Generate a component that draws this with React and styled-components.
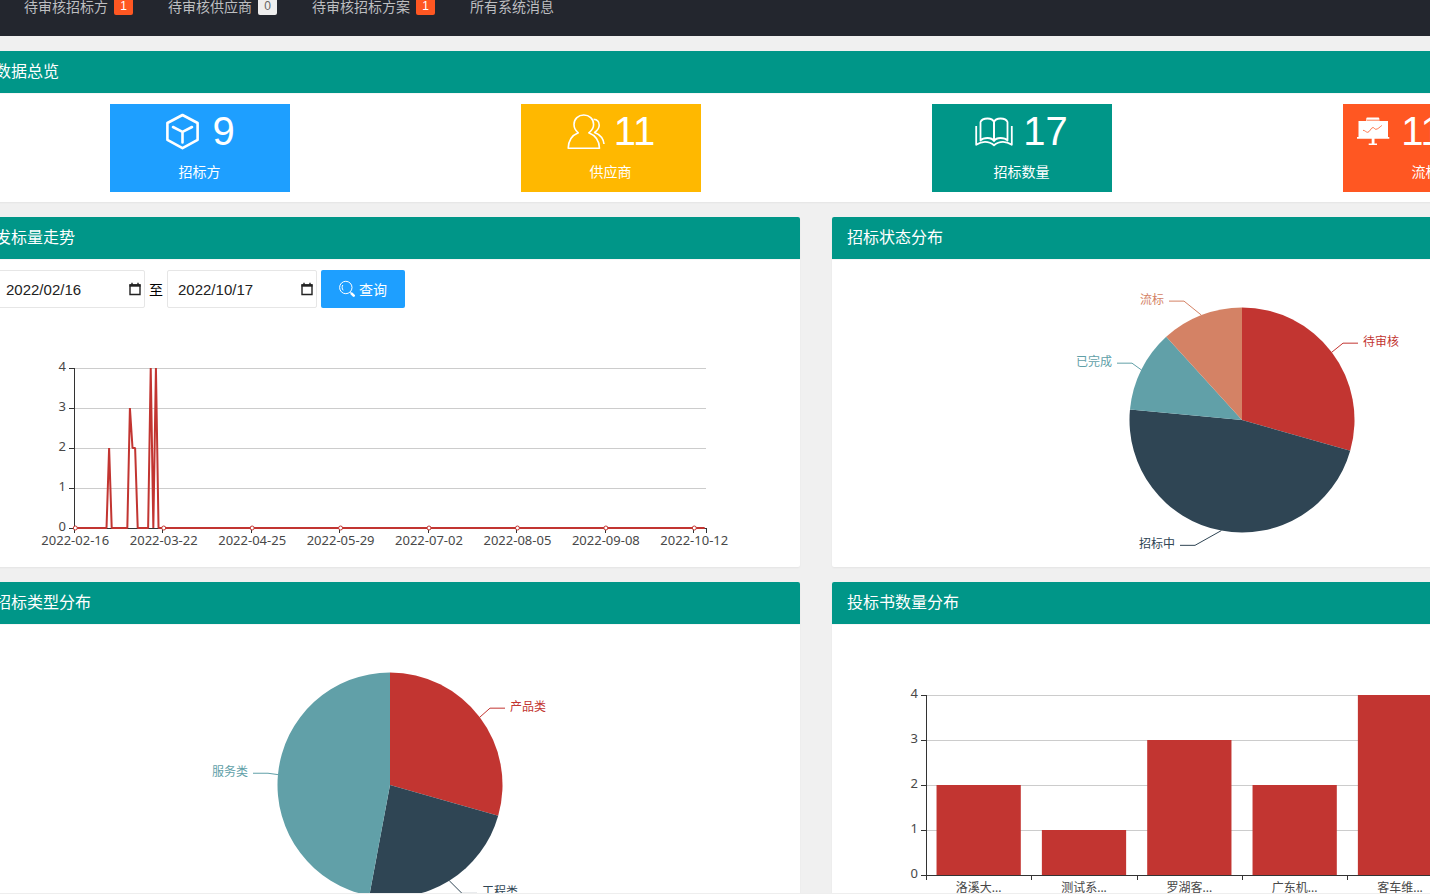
import React, { useState } from 'react';
import styled, { createGlobalStyle } from 'styled-components';

const GlobalStyle = createGlobalStyle`
  * {
    box-sizing: border-box;
  }
  body {
    margin: 0;
    background: #f0f0f0;
    color: #000;
    font-family: "Liberation Sans", "Noto Sans CJK SC", sans-serif;
    font-size: 14px;
  }
`;

// 页面外框
const Shell = styled.div`
  height: 100vh;
  overflow: hidden;
  border-bottom: 1px solid #eee;
`;

const Nav = styled.nav`
  display: flex;
  gap: 35px;
  height: 60px;
  margin-top: -24px;
  padding-left: 24px;
  background: #23262e;
`;

const NavLink = styled.a`
  display: flex;
  align-items: center;
  color: #bdbec0;
  text-decoration: none;
  white-space: nowrap;
`;

const Badge = styled.span`
  width: 19px;
  height: 18px;
  margin-left: 6px;
  border-radius: 2px;
  background: ${(props) => (props.$gray ? '#eee' : '#ff5722')};
  color: ${(props) => (props.$gray ? '#666' : '#fff')};
  font-size: 12px;
  line-height: 18px;
  text-align: center;
`;

const Main = styled.main`
  display: grid;
  grid-template-columns: 1fr 1fr;
  gap: 15px 32px;
  margin: 15px -222px 0 -20px;
`;

// 卡片
const Panel = styled.section`
  grid-column: ${(props) => (props.$wide ? '1 / -1' : 'auto')};
  border-radius: 2px;
  background: #fff;
  box-shadow: 0 1px 2px rgba(0, 0, 0, 0.05);
`;

const PanelTitle = styled.h2`
  margin: 0;
  padding: 0 15px;
  border-bottom: 1px solid #f6f6f6;
  border-radius: 2px 2px 0 0;
  background: #009688;
  background-clip: padding-box;
  color: #fff;
  font-size: 16px;
  font-weight: 400;
  line-height: 42px;
`;

const PanelBody = styled.div`
  padding: 10px 15px;
`;

const StatRow = styled.div`
  display: grid;
  grid-template-columns: repeat(4, 1fr);
  justify-items: center;
  padding: 10px 14px;
`;

const StatCard = styled.div`
  width: 180px;
  height: 88px;
  background: ${(props) => props.$color};
  color: #fff;
  text-align: center;
`;

const StatValue = styled.div`
  display: flex;
  align-items: center;
  justify-content: center;
  gap: 8px;
  height: 54px;
  font-size: 40px;
`;

const StatLabel = styled.div`
  line-height: 28px;
`;

const Filter = styled.form`
  display: flex;
  align-items: center;
  gap: 4px;
`;

const DateBox = styled.label`
  display: flex;
  align-items: center;
  width: 150px;
  height: 38px;
  padding: 0 2px 0 10px;
  border: 1px solid #e6e6e6;
  border-radius: 2px;
  background: #fff;
`;

const DateInput = styled.input`
  flex: 1;
  min-width: 0;
  padding: 0;
  border: 0;
  outline: 0;
  background: none;
  color: #222;
  font-family: inherit;
  font-size: 15px;
`;

const SearchButton = styled.button`
  display: flex;
  align-items: center;
  gap: 4px;
  height: 38px;
  padding: 0 18px;
  border: 0;
  border-radius: 2px;
  background: #1e9fff;
  color: #fff;
  font-family: inherit;
  font-size: 14px;
  cursor: pointer;
`;

const Chart = styled.svg`
  display: block;
  width: 100%;
  height: auto;
  overflow: visible;
  font-family: "Noto Sans", "Noto Sans CJK SC", sans-serif;
  font-size: 12px;
`;

const AxisText = styled.text`
  fill: #484848;
  font-size: ${(props) => (props.$cjk ? '12px' : '13px')};
  text-anchor: ${(props) => props.$anchor || 'middle'};
`;

// 图标
const CubeIcon = () => (
  <svg width="40" height="40" viewBox="0 0 40 40" fill="none" stroke="#fff" strokeWidth="2.6" strokeLinejoin="round" strokeLinecap="round">
    <path d="M18.5 4 33.6 12v16.8L18.5 37.2 3.4 28.8V12z" />
    <path d="M9 16l9.5 4.8L28 16M18.5 20.8v10.6" />
  </svg>
);

const UserIcon = () => (
  <svg width="40" height="40" viewBox="0 0 40 40" fill="none" stroke="#fff" strokeWidth="1.6" strokeLinejoin="round">
    <path d="M12.3 21.8C9.5 19.7 8 17 8 13.6 8 8 12.4 4 17.8 4s9.8 4 9.8 9.6c0 3.4-1.8 6.1-4.8 8.2 6.5 2.6 10.5 8.2 10.7 15.5H2.2c.2-7.3 3.7-12.9 10.1-15.5z" />
    <path d="M27.6 8.3c3.4.2 5.6 2.6 5.6 6 0 2.9-1.7 5.2-4.6 7.2 5.2 2 8.8 6.2 9.4 11.5" />
  </svg>
);

const BookIcon = () => (
  <svg width="40" height="40" viewBox="0 0 40 40" fill="none" stroke="#fff" strokeWidth="1.8" strokeLinejoin="round">
    <path d="M19 11C18 8.500 15.5 7.5 12.5 7.500S6.500 8.500 5.500 11v18.5c1.500-1.700 4-2.500 7-2.500s5.300 1 6.500 3c1.200-2 3.500-3 6.500-3s5.500.8 7 2.500V11c-1-2.500-3.500-3.500-7-3.500-3 0-5.500 1-6.500 3.500zv19" />
    <path d="M19 11v19" />
    <path d="M1.2 15v18.800c3.300-2.200 6-3 8.800-3 3.800 0 6.500 1.200 9 3.400 2.500-2.200 5.200-3.400 9-3.400 2.800 0 5.500.8 8.800 3V15" />
  </svg>
);

const BoardIcon = () => (
  <svg width="40" height="40" viewBox="0 0 40 40" fill="#fff">
    <path d="M5.500 10h7.800V7.600q0-1 1-1h11q1 0 1 1V10h8.700v16h1.300v1.800H21.500v4.700H24V34h-8.300v-1.500h3v-4.700H4V26h1.500z" />
    <path d="M14 9.200h12M10 19.300c2 0 3 2 4.700 2 2 0 3.300-4.800 5.300-4.800 1.200 0 1.500 1.800 2.800 1.800 2 0 4-2.300 6-3.800" fill="none" stroke="#ff5722" strokeWidth=".8" />
  </svg>
);

const SearchIcon = () => (
  <svg width="16" height="18" viewBox="0 0 16 18" fill="none" stroke="#fff">
    <circle cx="6.8" cy="7.5" r="6.2" />
    <path d="M3.8 5C2.800 6.600 2.900 8.800 4.200 10.300" />
    <path d="M11.300 12.200l1.200 1.200" />
    <path d="M12.700 13.700l2 2" strokeWidth="2.6" strokeLinecap="round" />
  </svg>
);

const CalendarIcon = () => (
  <svg width="14" height="14" viewBox="0 0 14 14" fill="none" stroke="#222">
    <path d="M2 3h10v9.500H2z" strokeWidth="1.4" />
    <path d="M1.500 3.500h11" strokeWidth="2.4" />
    <path d="M4 .7V3M10 .7V3" strokeWidth="1.4" />
  </svg>
);

const navItems = [
  { text: '待审核招标方', count: 1 },
  { text: '待审核供应商', count: 0 },
  { text: '待审核招标方案', count: 1 },
  { text: '所有系统消息' },
];

const stats = [
  { label: '招标方', value: '9', color: '#1e9fff', Icon: CubeIcon },
  { label: '供应商', value: '11', color: '#ffb800', Icon: UserIcon },
  { label: '招标数量', value: '17', color: '#009688', Icon: BookIcon },
  { label: '流标率', value: '11.8%', color: '#ff5722', Icon: BoardIcon },
];

// elbow: 引导线拐点的横坐标
const statusData = [
  { name: '待审核', value: 5, color: '#c23531', elbow: 496 },
  { name: '招标中', value: 8, color: '#2f4554', elbow: 348 },
  { name: '已完成', value: 2, color: '#61a0a8', elbow: 285 },
  { name: '流标', value: 2, color: '#d48265', elbow: 337 },
];

const typeData = [
  { name: '产品类', value: 5, color: '#c23531', elbow: 495 },
  { name: '工程类', value: 4, color: '#2f4554', elbow: 467 },
  { name: '服务类', value: 8, color: '#61a0a8', elbow: 273 },
];

const trendDates = [
  '2022-02-16', '2022-03-22', '2022-04-25', '2022-05-29',
  '2022-07-02', '2022-08-05', '2022-09-08', '2022-10-12',
];
const trendDays = 243;
const trendValues = { 13: 2, 21: 3, 22: 2, 23: 2, 29: 4, 31: 4 };

const bidData = [
  { name: '洛溪大...', value: 2 },
  { name: '测试系...', value: 1 },
  { name: '罗湖客...', value: 3 },
  { name: '广东机...', value: 2 },
  { name: '客车维...', value: 4 },
];

const YAxis = ({ top, bottom }) => (
  <g>
    {[0, 1, 2, 3, 4].map((n) => {
      const y = bottom - ((bottom - top) / 4) * n + 0.5;
      return (
        <g key={n}>
          {n > 0 && <path d={`M79 ${y}H711`} stroke="#ccc" />}
          <path d={`M74 ${y}h5`} stroke="#333" />
          <AxisText x="71" y={y + 2.5} $anchor="end">{n}</AxisText>
        </g>
      );
    })}
    <path d={`M79.5 ${top}V${bottom + 1}`} stroke="#333" />
    <path d={`M79 ${bottom + 0.5}H711`} stroke="#333" />
  </g>
);

const TrendChart = () => {
  const step = 632 / trendDays;
  const xOf = (i) => 79 + step * (i + 0.5);
  const points = Array.from({ length: trendDays }, (_, i) => `${xOf(i)},${220 - (trendValues[i] || 0) * 40}`);
  return (
    <Chart viewBox="0 0 790 249" role="img" aria-label="发标量走势">
      <YAxis top={60} bottom={220} />
      {trendDates.map((date, i) => (
        <g key={date}>
          <path d={`M${Math.round(79 + step * 34 * i) + 0.5} 220v5`} stroke="#333" />
          <AxisText x={xOf(34 * i)} y="237">{date}</AxisText>
        </g>
      ))}
      <path d="M711.5 220v5" stroke="#333" />
      <polyline points={points.join(' ')} fill="none" stroke="#c23531" strokeWidth="2" strokeLinejoin="bevel" />
      {trendDates.map((date, i) => (
        <circle key={date} cx={xOf(34 * i)} cy="220" r="2" fill="#fff" stroke="#c23531" />
      ))}
    </Chart>
  );
};

const PieChart = ({ data, title }) => {
  const cx = 395;
  const cy = 150;
  const r = 112.5;
  const total = data.reduce((sum, d) => sum + d.value, 0);
  const point = (angle, radius) => [cx + Math.sin(angle) * radius, cy - Math.cos(angle) * radius];
  let start = 0;
  return (
    <Chart viewBox="0 0 790 287" role="img" aria-label={title}>
      {data.map((d) => {
        const end = start + (d.value / total) * Math.PI * 2;
        const mid = (start + end) / 2;
        const [x1, y1] = point(start, r);
        const [x2, y2] = point(end, r);
        const [lx, ly] = point(mid, r);
        const ey = point(mid, r + 15)[1];
        const side = lx > cx ? 1 : -1;
        const large = end - start > Math.PI ? 1 : 0;
        start = end;
        return (
          <g key={d.name}>
            <path d={`M${cx} ${cy}L${x1} ${y1}A${r} ${r} 0 ${large} 1 ${x2} ${y2}z`} fill={d.color} />
            <path d={`M${lx} ${ly}L${d.elbow} ${ey}h${side * 15}`} fill="none" stroke={d.color} />
            <text x={d.elbow + side * 20} y={ey + 3} fill={d.color} textAnchor={side > 0 ? 'start' : 'end'}>
              {d.name}
            </text>
          </g>
        );
      })}
    </Chart>
  );
};

const BidChart = () => {
  const band = 632 / 6;
  return (
    <Chart viewBox="0 0 790 287" role="img" aria-label="投标书数量分布">
      <YAxis top={60} bottom={240} />
      {bidData.map((d, i) => (
        <g key={d.name}>
          <rect x={79 + band * (i + 0.1)} y={240 - d.value * 45} width={band * 0.8} height={d.value * 45} fill="#c23531" />
          <path d={`M${Math.round(79 + band * i) + 0.5} 240v5`} stroke="#333" />
          <AxisText x={79 + band * (i + 0.5)} y="257" $cjk>{d.name}</AxisText>
        </g>
      ))}
    </Chart>
  );
};

const DateField = ({ label, value, onChange }) => (
  <DateBox>
    <DateInput type="text" aria-label={label} value={value} onChange={(e) => onChange(e.target.value)} />
    <CalendarIcon />
  </DateBox>
);

export default function App() {
  const [from, setFrom] = useState('2022/02/16');
  const [to, setTo] = useState('2022/10/17');

  return (
    <Shell>
      <GlobalStyle />
      <Nav>
        {navItems.map((item) => (
          <NavLink href="#" key={item.text}>
            {item.text}
            {item.count !== undefined && <Badge $gray={item.count === 0}>{item.count}</Badge>}
          </NavLink>
        ))}
      </Nav>
      <Main>
        <Panel $wide>
          <PanelTitle>数据总览</PanelTitle>
          <StatRow>
            {stats.map(({ label, value, color, Icon }) => (
              <StatCard key={label} $color={color}>
                <StatValue>
                  <Icon />
                  {value}
                </StatValue>
                <StatLabel>{label}</StatLabel>
              </StatCard>
            ))}
          </StatRow>
        </Panel>
        <Panel>
          <PanelTitle>发标量走势</PanelTitle>
          <PanelBody>
            <Filter onSubmit={(e) => e.preventDefault()}>
              <DateField label="开始日期" value={from} onChange={setFrom} />
              <span>至</span>
              <DateField label="结束日期" value={to} onChange={setTo} />
              <SearchButton type="submit">
                <SearchIcon />
                查询
              </SearchButton>
            </Filter>
            <TrendChart />
          </PanelBody>
        </Panel>
        <Panel>
          <PanelTitle>招标状态分布</PanelTitle>
          <PanelBody>
            <PieChart data={statusData} title="招标状态分布" />
          </PanelBody>
        </Panel>
        <Panel>
          <PanelTitle>招标类型分布</PanelTitle>
          <PanelBody>
            <PieChart data={typeData} title="招标类型分布" />
          </PanelBody>
        </Panel>
        <Panel>
          <PanelTitle>投标书数量分布</PanelTitle>
          <PanelBody>
            <BidChart />
          </PanelBody>
        </Panel>
      </Main>
    </Shell>
  );
}
